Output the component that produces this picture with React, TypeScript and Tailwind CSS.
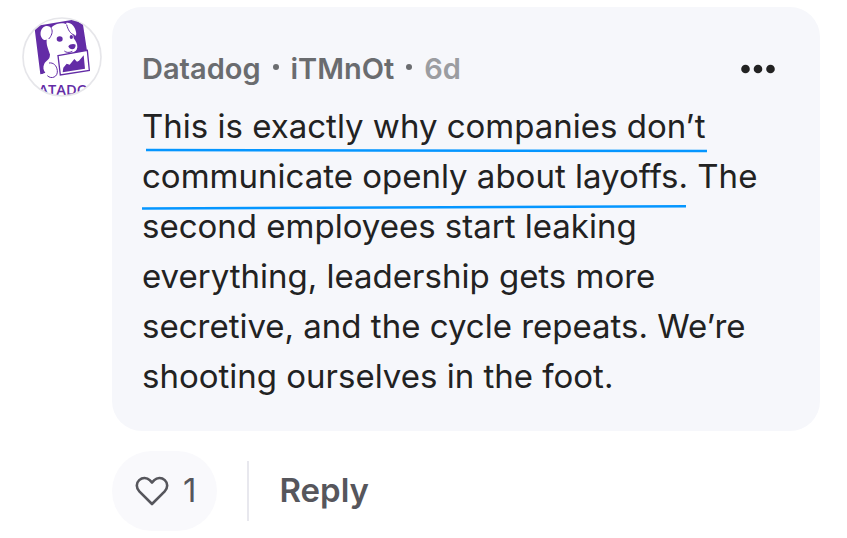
import { FC } from 'react';

type IconProps = {
  className?: string;
};

const DatadogLogo: FC<IconProps> = ({ className }) => {
  return (
    <svg viewBox="36 36 240 240" className={className} role="img" aria-label="Datadog">
      <defs>
        <clipPath id="avatar-clip">
          <circle cx="156" cy="156" r="117" />
        </clipPath>
      </defs>
      <circle cx="156" cy="156" r="118" fill="#fff" />
      <g clipPath="url(#avatar-clip)">
        {/* panel */}
        <path d="M73 64 L216 40 L231 137 L200 145 L190 160 L150 200 L91 208 Z" fill="#632ca6" />
        {/* body */}
        <path
          d="M121 140 L119 156 C116 166 107 168 103 176 C98 186 100 196 106 203 L92 209 L104 230 L160 226 L160 150 L196 141 Z"
          fill="#fff"
        />
        {/* head */}
        <path
          d="M128 64 C142 53 162 52 174 60 C186 68 190 84 191 100 C197 108 203 116 202 127 C201 137 194 142 186 143 L150 152 L121 152 C118 138 108 122 110 104 C112 92 118 74 128 64 Z"
          fill="#fff"
        />
        <path
          d="M100 67 C108 60 119 62 123 69 C128 78 124 91 117 99 C111 106 102 107 97 101 C89 92 90 75 100 67 Z"
          fill="#fff"
        />
        <path d="M168 54 C178 50 189 58 194 69 C199 80 201 91 196 92 C189 90 181 84 178 76 Z" fill="#fff" />
        <path d="M124 70 C130 80 124 94 116 102" fill="none" stroke="#632ca6" strokeWidth="3" />
        <path d="M170 59 C174 74 180 86 194 91" fill="none" stroke="#632ca6" strokeWidth="3" />
        <ellipse cx="149" cy="102" rx="9" ry="8" fill="#632ca6" />
        <ellipse cx="184" cy="96" rx="5" ry="6" fill="#632ca6" />
        <path d="M175 124 C179 117 191 115 197 119 C197 128 192 133 187 133 C181 133 177 129 175 124 Z" fill="#632ca6" />
        <path d="M163 138 C168 143 178 144 187 139" fill="none" stroke="#632ca6" strokeWidth="3" />
        {/* chart board */}
        <path d="M144 152 L232 136 L238 196 L151 210 Z" fill="#fff" stroke="#632ca6" strokeWidth="4" />
        <path d="M158 202 L160 188 L170 176 L179 179 L193 162 L201 170 L207 167 L221 151 L225 191 Z" fill="#632ca6" />
        <path d="M112 212 C124 224 144 216 142 197 C140 181 130 172 117 174" fill="none" stroke="#632ca6" strokeWidth="3" />
        <text
          x="160"
          y="270"
          textAnchor="middle"
          fontSize="44"
          fontWeight="600"
          className="font-['Open_Sans',sans-serif]"
          fill="#632ca6"
        >
          DATADOG
        </text>
      </g>
      <circle cx="156" cy="156" r="117" fill="none" stroke="#e6e6ea" strokeWidth="5" />
    </svg>
  );
};

const MoreIcon: FC<IconProps> = ({ className }) => {
  return (
    <svg viewBox="0 0 34 10" fill="currentColor" className={className} aria-hidden="true">
      <circle cx="4.5" cy="5" r="4.3" />
      <circle cx="17" cy="5" r="4.3" />
      <circle cx="29.5" cy="5" r="4.3" />
    </svg>
  );
};

const HeartIcon: FC<IconProps> = ({ className }) => {
  return (
    <svg viewBox="0 0 34 30" fill="none" className={className} aria-hidden="true">
      <path
        d="M17 28 L4.3 15.3 C1 12 1 7 4.2 4.1 C7.4 1.2 12 1.4 14.7 4.2 L17 6.5 L19.3 4.2 C22 1.4 26.6 1.2 29.8 4.1 C33 7 33 12 29.7 15.3 Z"
        stroke="currentColor"
        strokeWidth="2.6"
        strokeLinejoin="round"
      />
    </svg>
  );
};

const Separator = () => <span className="size-[6px] rounded-full bg-[#6b6d70] mb-1" aria-hidden="true" />;

const Comment = () => {
  return (
    <article className="flex items-start gap-[10px] pt-[7px] pl-[22px] pr-[27px]">
      <DatadogLogo className="size-20 shrink-0 mt-[10px]" />
      <div className="min-w-0 flex-1">
        <div className="rounded-[30px] bg-[#f6f7fb] p-[30px]">
          <header className="flex h-16 items-center justify-between">
            <div className="flex items-center gap-3 text-[29px] font-semibold text-[#6a6c6f]">
              <a href="#company">Datadog</a>
              <Separator />
              <a href="#author">iTMnOt</a>
              <Separator />
              <time className="text-[#9b9da1]">6d</time>
            </div>
            <button type="button" aria-label="More options" className="mr-[15px] text-[#222]">
              <MoreIcon className="h-[10px] w-[34px]" />
            </button>
          </header>
          <div className="relative">
            <p className="text-[33px] leading-[50px] text-[#222]">
              This is exactly why companies don’t communicate openly about layoffs. The second employees start
              leaking everything, leadership gets more secretive, and the cycle repeats. We’re shooting ourselves
              in the foot.
            </p>
            {/* hand-drawn highlights */}
            <svg
              viewBox="0 0 648 300"
              className="pointer-events-none absolute top-0 left-0 h-[300px] w-[648px]"
              fill="none"
              stroke="#0596ff"
              strokeWidth="2.5"
              aria-hidden="true"
            >
              <path d="M4 49 L565 50" />
              <path d="M0 107.5 L544 105.3" />
            </svg>
          </div>
        </div>
        <footer className="mt-5 flex items-center text-[#56565c]">
          <button
            type="button"
            aria-label="Like"
            className="flex h-20 items-center gap-[14px] rounded-full bg-[#f9f9fc] pr-[21px] pl-[23px] text-[33px]"
          >
            <HeartIcon className="h-[30px] w-[34px]" />
            1
          </button>
          <span className="ml-[30px] h-[60px] w-[2px] bg-[#e8e8ee]" aria-hidden="true" />
          <button type="button" className="ml-[30px] text-[33px] font-semibold">
            Reply
          </button>
        </footer>
      </div>
    </article>
  );
};

export default function App() {
  return (
    <main className="min-h-screen bg-white font-['Inter','Liberation_Sans',sans-serif]">
      <Comment />
    </main>
  );
}
